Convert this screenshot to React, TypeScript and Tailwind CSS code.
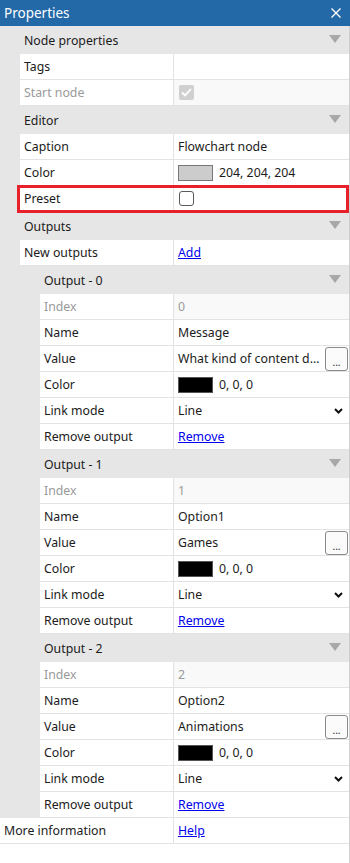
import React from "react";

const LABEL1 = "w-[154px]";
const LABEL2 = "w-[134px]";

function Arrow() {
  return (
    <svg width="12" height="8" viewBox="0 0 12 8" className="mr-[8px] -mt-[2px]">
      <path d="M0 0h12L6 8z" fill="#a8a8a8" />
    </svg>
  );
}

function Header({ title }: { title: string }) {
  return (
    <div className="flex h-[28px] items-center justify-between pl-1">
      <span className="pt-[2px]">{title}</span>
      <Arrow />
    </div>
  );
}

function Row({
  label,
  labelW,
  disabled,
  children,
}: {
  label: string;
  labelW: string;
  disabled?: boolean;
  children?: React.ReactNode;
}) {
  return (
    <div className="flex h-[26px] border-b border-[#e3e3e3] bg-white">
      <div
        className={`${labelW} flex shrink-0 items-center border-r border-[#e3e3e3] pl-1 pt-[2px] ${
          disabled ? "text-[#9a9a9a]" : ""
        }`}
      >
        {label}
      </div>
      <div
        className={`flex min-w-0 flex-1 items-center pl-1 pt-[2px] ${
          disabled ? "bg-[#f9f9f9] text-[#9a9a9a]" : ""
        }`}
      >
        {children}
      </div>
    </div>
  );
}

function Swatch({ color, text }: { color: string; text: string }) {
  return (
    <div className="-mt-[2px] flex items-center gap-[6px]">
      <div
        className={`h-[16px] w-[35px] border ${
          color === "black" ? "border-[#555] bg-black" : "border-[#777] bg-[#cccccc]"
        }`}
      />
      <span className="pt-[2px]">{text}</span>
    </div>
  );
}

function Link({ children }: { children: React.ReactNode }) {
  return <span className="text-[#0000ee] underline">{children}</span>;
}

function Output({ n, name, value }: { n: number; name: string; value: string }) {
  return (
    <div className="pl-5">
      <Header title={`Output - ${n}`} />
      <Row label="Index" labelW={LABEL2} disabled>
        {n}
      </Row>
      <Row label="Name" labelW={LABEL2}>
        {name}
      </Row>
      <Row label="Value" labelW={LABEL2}>
        <div className="-mt-[2px] flex w-full items-center gap-[4px]">
          <span className="min-w-0 flex-1 truncate pt-[2px]">{value}</span>
          <button className="mr-[1px] flex h-[24px] w-[23px] shrink-0 items-end justify-center rounded-[3px] border border-[#8a8a8a] bg-[#fbfbfb] pb-[3px] text-[10px] leading-none">
            ...
          </button>
        </div>
      </Row>
      <Row label="Color" labelW={LABEL2}>
        <Swatch color="black" text="0, 0, 0" />
      </Row>
      <Row label="Link mode" labelW={LABEL2}>
        <div className="flex w-full items-center justify-between pr-[6px]">
          <span>Line</span>
          <svg width="9" height="6" viewBox="0 0 9 6" className="-mt-[2px]">
            <path d="M1 1l3.5 3.5L8 1" fill="none" stroke="#111" strokeWidth="2" />
          </svg>
        </div>
      </Row>
      <Row label="Remove output" labelW={LABEL2}>
        <Link>Remove</Link>
      </Row>
    </div>
  );
}

export default function App() {
  return (
    <div
      className="flex h-[863px] w-[350px] flex-col overflow-hidden bg-white text-[12.3px] text-[#1b1b1b]"
      style={{ fontFamily: '"Noto Sans", "Open Sans", sans-serif' }}
    >
      <div className="flex h-[26px] shrink-0 items-center justify-between bg-[#2368a7] pl-1 pr-[9px] text-[13.5px] text-white">
        <span>Properties</span>
        <svg width="10" height="10" viewBox="0 0 10 10">
          <path d="M0.5 0.5l9 9M9.5 0.5l-9 9" stroke="#fff" strokeWidth="1.4" />
        </svg>
      </div>

      <div className="flex flex-1 flex-col border-r border-[#cfcfcf]">
        <div className="bg-[#e6e6e6] pl-5">
          <Header title="Node properties" />
          <Row label="Tags" labelW={LABEL1} />
          <Row label="Start node" labelW={LABEL1} disabled>
            <div className="-mt-[2px] ml-[1px] flex h-[15px] w-[15px] items-center justify-center rounded-[2px] bg-[#d0d0d0]">
              <svg width="11" height="9" viewBox="0 0 11 9">
                <path d="M1 4.5l3 3L10 1" fill="none" stroke="#fff" strokeWidth="1.8" />
              </svg>
            </div>
          </Row>

          <Header title="Editor" />
          <Row label="Caption" labelW={LABEL1}>
            Flowchart node
          </Row>
          <Row label="Color" labelW={LABEL1}>
            <Swatch color="gray" text="204, 204, 204" />
          </Row>
          <div className="relative">
            <Row label="Preset" labelW={LABEL1}>
              <div className="-mt-[2px] ml-[1px] h-[15px] w-[15px] rounded-[3px] border border-[#5a5a5a] bg-white" />
            </Row>
            <div className="pointer-events-none absolute -left-[3px] -top-[1px] bottom-[-1px] right-0 border-[3px] border-[#e8202a]" />
          </div>

          <Header title="Outputs" />
          <Row label="New outputs" labelW={LABEL1}>
            <Link>Add</Link>
          </Row>

          <Output n={0} name="Message" value="What kind of content do you like?" />
          <Output n={1} name="Option1" value="Games" />
          <Output n={2} name="Option2" value="Animations" />
        </div>

        <div className="flex h-[26px] border-b border-[#e3e3e3] bg-white">
          <div className="flex w-[174px] shrink-0 items-center border-r border-[#e3e3e3] pl-1 pt-[2px]">
            More information
          </div>
          <div className="flex flex-1 items-center pl-1 pt-[2px]">
            <Link>Help</Link>
          </div>
        </div>
      </div>
    </div>
  );
}
